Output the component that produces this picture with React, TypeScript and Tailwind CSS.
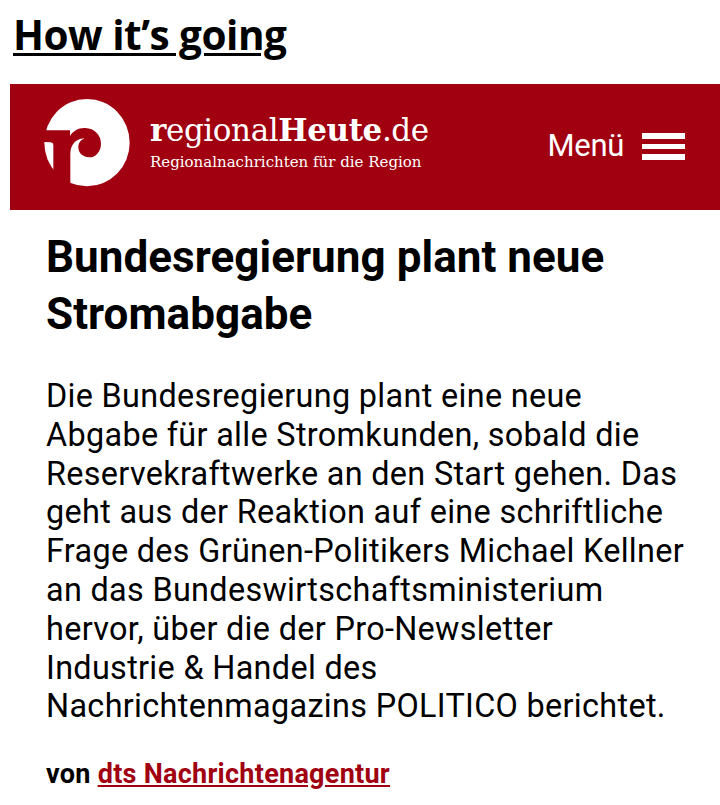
import React from "react";

const Logo: React.FC = () => (
  <svg viewBox="0 0 258 264" className="h-[88px] w-[86px] shrink-0">
    <ellipse cx="129" cy="131" rx="128" ry="131" fill="#fff" />
    {/* Stem and hook of the "r", cut out of the disc */}
    <path
      d="M0 94H78V111C87 96 103 86 124 87C151 88 171 108 171 134C171 158 155 175 136 175C117 175 103 162 103 145C103 131 110 122 121 119C98 117 79 137 79 164V264H28V138Q28 131 20 130L0 129Z"
      fill="#a00010"
    />
  </svg>
);

const MenuButton: React.FC = () => (
  <button className="flex items-center gap-[18px] text-white">
    <span className="text-[31px] leading-9 tracking-[-0.3px]">Menü</span>
    <span className="flex w-[43px] flex-col gap-[5px]">
      <span className="h-[6px] bg-white" />
      <span className="h-[5px] bg-white" />
      <span className="h-[6px] bg-white" />
    </span>
  </button>
);

export default function App() {
  return (
    <div className="h-[805px] w-[720px] overflow-hidden bg-white font-['Roboto',sans-serif] text-black">
      <h1 className="h-[84px] pl-[13px] pt-[7px] font-['Open_Sans',sans-serif] text-[40.5px] leading-[55px] font-bold tracking-[-0.5px] underline decoration-[3px] underline-offset-[3px]">
        How it’s going
      </h1>

      <header className="ml-[10px] flex h-[126px] items-center justify-between bg-[#a00010] pr-[35px] pb-[2px] pl-[34px]">
        <div className="flex items-center gap-5 pb-[6px]">
          <Logo />
          <div className="font-['DejaVu_Serif',serif] whitespace-nowrap text-white">
            <div className="text-[31px] leading-9 tracking-[-0.4px]">
              <b>r</b>egional<b>Heute</b>.de
            </div>
            <div className="pt-[2px] text-[15px] leading-6">Regionalnachrichten für die Region</div>
          </div>
        </div>
        <MenuButton />
      </header>

      <article className="pt-[19px] pl-[46px]">
        <h2 className="text-[44px] leading-[57px] font-bold tracking-[0.04px] whitespace-nowrap">
          Bundesregierung plant neue
          <br />
          Stromabgabe
        </h2>
        <p className="mt-[34px] text-[32.4px] leading-[38.8px] tracking-[0.32px] whitespace-nowrap">
          Die Bundesregierung plant eine neue
          <br />
          Abgabe für alle Stromkunden, sobald die
          <br />
          Reservekraftwerke an den Start gehen. Das
          <br />
          geht aus der Reaktion auf eine schriftliche
          <br />
          Frage des Grünen-Politikers Michael Kellner
          <br />
          an das Bundeswirtschaftsministerium
          <br />
          hervor, über die der Pro-Newsletter
          <br />
          Industrie &amp; Handel des
          <br />
          Nachrichtenmagazins POLITICO berichtet.
        </p>
        <p className="mt-[32px] text-[27px] leading-8 font-bold tracking-[0.27px]">
          von{" "}
          <a href="#" className="text-[#a00010] underline">
            dts Nachrichtenagentur
          </a>
        </p>
      </article>
    </div>
  );
}
